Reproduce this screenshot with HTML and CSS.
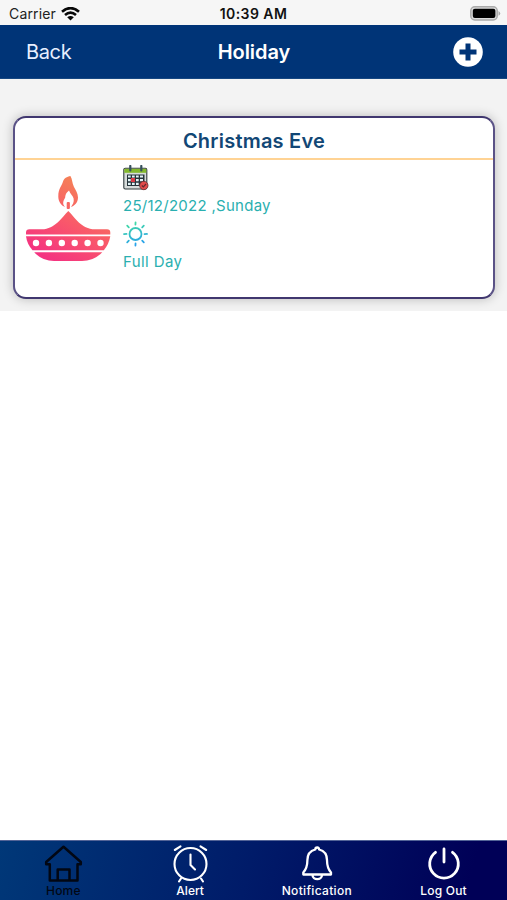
FILE: index.html
```html
<!DOCTYPE html>
<html lang="en">
<head>
<meta charset="utf-8">
<title>Holiday</title>
<link rel="stylesheet" href="styles.css">
</head>
<body>
<div class="app">
  <header class="status">
    <div class="carrier"><span>Carrier</span>
      <svg width="19" height="14" viewBox="0 0 19 14" fill="none" stroke="#080808" stroke-width="2.6"><path d="M1 4.800Q9.500-2.600 18 4.800"/><path d="M4 8Q9.500 3.200 15 8"/><path d="M9.500 13.500 6.200 10.200Q9.500 7.600 12.800 10.200Z" fill="#080808" stroke="none"/></svg>
    </div>
    <span class="time">10:39 AM</span>
    <svg class="battery" width="31" height="15" viewBox="0 0 31 15"><rect x=".8" y=".8" width="26.4" height="13.2" rx="4" fill="#dcdcdc" stroke="#aaa" stroke-width="1.5"/><rect x="2.8" y="2.8" width="22.6" height="9.2" rx="2" fill="#000"/><path d="M28.5 5Q32 7.4 28.5 9.8Z" fill="#aaa"/></svg>
  </header>
  <nav class="nav">
    <span class="back">Back</span>
    <h1>Holiday</h1>
    <svg class="add" width="30" height="30" viewBox="0 0 30 30"><circle cx="15" cy="15" r="14.8" fill="#fff"/><path d="M15 6.500v17M6.500 15h17" stroke="#003477" stroke-width="5"/></svg>
  </nav>
  <main class="list">
    <article class="card">
      <h2><span>Christmas Eve</span></h2>
      <div class="card-body">
        <svg class="lamp" width="86" height="88" viewBox="0 0 86 88">
          <defs><linearGradient id="lamp" gradientUnits="userSpaceOnUse" x1="18" y1="80" x2="58" y2="12"><stop stop-color="#f43380"/><stop offset=".5" stop-color="#f9576b"/><stop offset="1" stop-color="#f57e58"/></linearGradient></defs>
          <g fill="url(#lamp)">
            <path d="M45.400 1C47.500 4 47 8 49 12c1.500 3 4 6 4 10.500 0 5-3.500 8.500-7 9.500 1.700-2.500 3.300-5 2.600-8.500-.6-2.800-3.500-4.500-4.600-8-3 2.500-3.500 4-3.800 7C39 25 36.500 28 40 32 36 30.500 33.300 26.500 33.300 21.500 33.300 13 37 11 38 6.500c.8-3 4-5 7.400-5.500Z"/>
            <rect x="41.700" y="27" width="3.200" height="7" rx="1"/>
            <path d="M43.300 36C50 42 56 54.300 70 54.300H82Q85.300 54.300 85.300 57.500V59.400H1V57.500Q1 54.300 4.500 54.300H17C30 54.300 37 42 43.300 36Z"/>
            <path d="M1 61.300H85.300Q84 69 78.800 75.300H7.500Q2 69 1 61.300Z"/>
            <path d="M9.200 77.200H77.300Q69 86 57 86H29Q17 86 9.200 77.200Z"/>
          </g>
          <g fill="#fff"><circle cx="11" cy="68" r="3.200"/><circle cx="23.900" cy="68" r="3.200"/><circle cx="36.800" cy="68" r="3.200"/><circle cx="49.700" cy="68" r="3.200"/><circle cx="62.600" cy="68" r="3.200"/><circle cx="75.500" cy="68" r="3.200"/></g>
        </svg>
        <div class="details">
          <svg width="26" height="26" viewBox="0 0 26 26">
            <rect x=".8" y="3.300" width="23" height="20.700" rx="1.500" fill="#d7dcdb" stroke="#303a3d" stroke-width="1.100"/>
            <path d="M1.300 3.800h22v4h-22z" fill="#83b92d"/>
            <path d="M4 9.500h17.500v11.500H4z" fill="#25333a"/>
            <path d="M5 10.500h2.700v2H5zm4 0h2.700v2H9zm4 0h2.700v2H13zm4 0h3v2h-3zM5 14h2.700v2.300H5zm8 0h2.700v2.300H13zm4 0h3v2.300h-3zM5 17.800h2.700V20H5zm4 0h2.700V20H9zm4 0h2.700V20H13z" fill="#e3f3f7"/>
            <path d="M8 13h4v4H8z" fill="#d93945"/>
            <path d="M7.300 1v4.500M18.300 1v4.500" stroke="#36515b" stroke-width="2.200" stroke-linecap="round"/>
            <circle cx="20.800" cy="20.500" r="4.200" fill="#e24b4b" stroke="#653034" stroke-width=".8"/><path d="m18.800 20.500 1.500 1.500 2.700-3" fill="none" stroke="#642830" stroke-width="1.200"/>
          </svg>
          <p class="date">25/12/2022 ,Sunday</p>
          <svg width="26" height="26" viewBox="0 0 26 26">
            <defs><linearGradient id="sun" gradientUnits="userSpaceOnUse" x1="8" y1="1" x2="15" y2="25"><stop stop-color="#42dda0"/><stop offset="1" stop-color="#269df0"/></linearGradient></defs>
            <g fill="none" stroke="url(#sun)" stroke-width="1.800" stroke-linecap="round"><circle cx="12.500" cy="13" r="6"/><path d="M12.550 1.500l-.1 2M12.550 22.500l-.1 2M1 13.050l2.500-.1M21.500 13.050l2.500-.1M4.200 4.700l1.600 1.600M19.200 19.700l1.600 1.600M20.800 4.700l-1.600 1.600M5.800 19.700l-1.600 1.600"/></g>
          </svg>
          <p class="period">Full Day</p>
        </div>
      </div>
    </article>
  </main>
  <footer class="tabs">
    <div class="tab active">
      <svg width="40" height="40" viewBox="0 0 40 40" fill="none" stroke="currentColor" stroke-width="2.500" stroke-linejoin="round"><path d="M6.800 36.500V20.300H3.200V18L20.500 2.800 37.800 18V20.300H34.500V36.500Z"/><path d="M14.700 36.500V25.500H26.500V36.500"/></svg>
      <span class="home">Home</span>
    </div>
    <div class="tab">
      <svg width="40" height="40" viewBox="0 0 40 40" fill="none" stroke="currentColor" stroke-width="2.100" stroke-linecap="round" stroke-linejoin="round"><circle cx="20.500" cy="20" r="16"/><path d="M20.500 10.500v10.500l4.500 4.500M11 34.500 9 37.500M31 34.500 33 37.500M4.800 6 10.500 2.300M30.500 2.300 36.200 6"/></svg>
      <span class="alert">Alert</span>
    </div>
    <div class="tab">
      <svg width="40" height="40" viewBox="0 0 40 40" fill="none" stroke="currentColor" stroke-width="2.300" stroke-linecap="round" stroke-linejoin="round"><path d="M18.300 5.500Q18.300 3.500 20.200 3.500T22.100 5.500Q30 7.500 30 16 30 24 34 28.500V30.500H6.300V28.500Q10.400 24 10.400 16 10.400 7.500 18.300 5.500ZM15.500 31C15.500 36.500 25 36.500 25 31"/></svg>
      <span class="notification">Notification</span>
    </div>
    <div class="tab">
      <svg width="40" height="40" viewBox="0 0 40 40" fill="none" stroke="currentColor" stroke-width="2.800" stroke-linecap="round"><path d="M20 5v13M11.500 8.300A14.300 14.300 0 1 0 28.500 8.300"/></svg>
      <span class="logout">Log Out</span>
    </div>
  </footer>
</div>
</body>
</html>
```
FILE: styles.css
```css
* { box-sizing: border-box; }
body { margin: 0; background: #fff; font-family: Inter, "Liberation Sans", sans-serif; }
h1, h2, p { margin: 0; }
svg { display: block; flex: none; }
.app { width: 100%; height: 900px; display: flex; flex-direction: column; }
.status { height: 25px; flex: none; display: grid; grid-template-columns: 1fr auto 1fr; align-items: center; padding: 2px 6px 0 9px; background: #f6f6f6; color: #222; }
.carrier { display: flex; align-items: center; gap: 5px; font-size: 14px; letter-spacing: .15px; }
.time { margin-right: 3px; font-size: 14px; font-weight: 600; letter-spacing: .45px; color: #111; }
.battery { justify-self: end; }
.nav { height: 54px; flex: none; display: grid; grid-template-columns: 1fr auto 1fr; align-items: center; padding: 0 24px 0 26px; background: #003477; color: #fff; border-bottom: 1px solid #164782; }
.back { font-size: 20px; letter-spacing: -.35px; color: #e7efff; }
h1 { margin-right: 1px; font-size: 20px; font-weight: 600; letter-spacing: -.05px; }
.add { justify-self: end; }
.list { height: 232px; flex: none; padding: 37px 12px 12px 13px; background: #f3f3f3; }
.card { height: 183px; border: 2px solid #5a5286; border-top-color: #40376f; border-bottom-color: #40376f; border-radius: 13px; background: #fff; box-shadow: 0 0 11px rgba(0, 0, 0, .24); }
h2 { height: 42px; display: flex; align-items: center; justify-content: center; padding-top: 5px; border-bottom: 2px solid #ffd394; font-size: 20px; font-weight: 600; letter-spacing: .23px; color: #124775; }
.card-body { display: flex; padding: 5px 0 0 10px; }
.lamp { margin-top: 10px; }
.details { margin-left: 12px; color: #2aafb0; font-size: 15px; line-height: 30px; }
.date { letter-spacing: .27px; }
.period { letter-spacing: .4px; }
.tabs { height: 60px; flex: none; margin-top: auto; display: grid; grid-template-columns: repeat(4, 1fr); background: linear-gradient(105deg, #003878, #001b69 49%, #000057 92%); border-top: 1px solid #536497; color: #fff; }
.tab { display: flex; flex-direction: column; align-items: center; padding-top: 3px; font-size: 12px; font-weight: 500; line-height: 14px; }
.home, .logout { letter-spacing: .2px; }
.notification { letter-spacing: .33px; }
.active { color: #020713; }
```
